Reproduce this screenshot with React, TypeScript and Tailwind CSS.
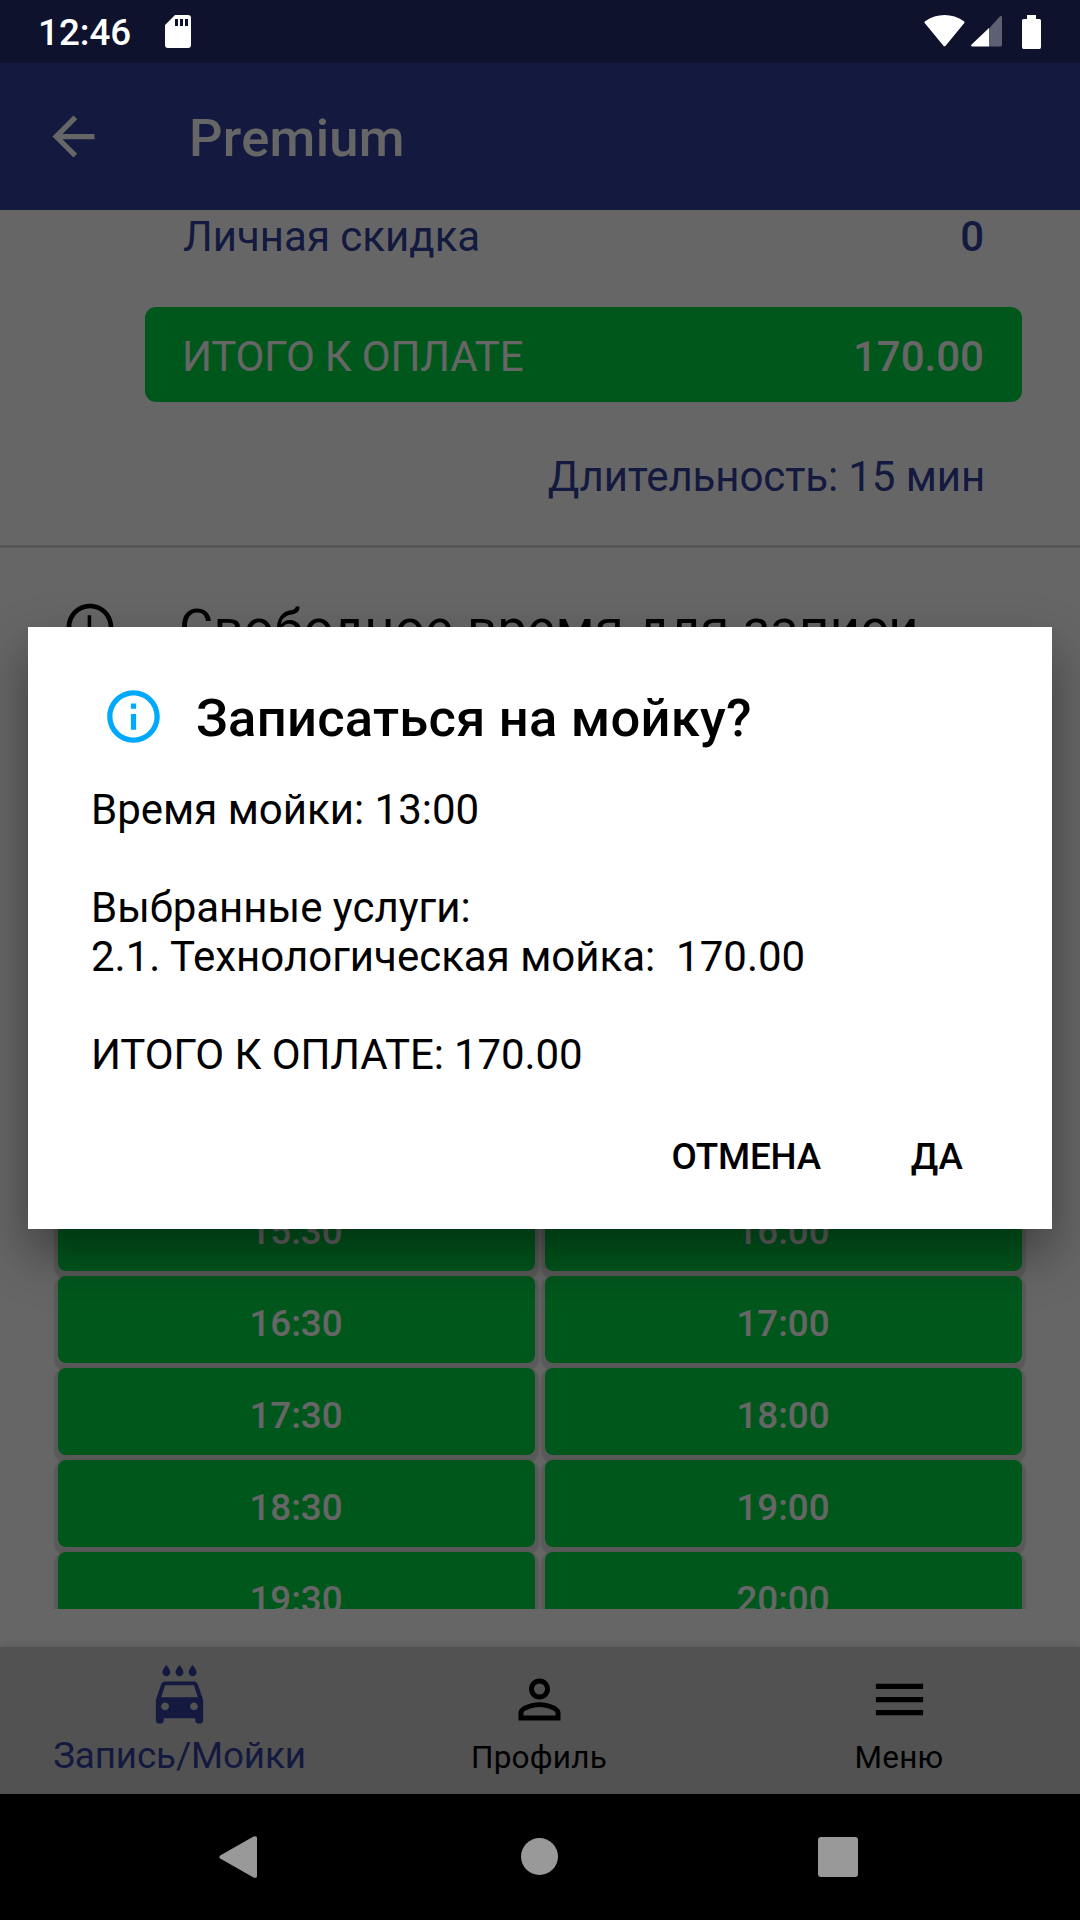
import { useState } from "react";
import {
  MdAccessTime,
  MdArrowBack,
  MdInfoOutline,
  MdLocalCarWash,
  MdMenu,
  MdPersonOutline,
} from "react-icons/md";

interface Slot {
  time: string;
}

const slots: Slot[] = [
  { time: "15:30" },
  { time: "16:00" },
  { time: "16:30" },
  { time: "17:00" },
  { time: "17:30" },
  { time: "18:00" },
  { time: "18:30" },
  { time: "19:00" },
  { time: "19:30" },
  { time: "20:00" },
];

function StatusBar() {
  return (
    <div className="relative z-20 flex h-[63px] items-center justify-between pl-[38px] pr-[39px] text-white">
      <div className="flex items-center">
        <span className="mt-[4px] text-[36.75px] font-medium leading-none">12:46</span>
        <svg className="ml-[34px] h-[33px] w-[26px]" viewBox="0 0 26 33">
          <path
            fill="currentColor"
            fillRule="evenodd"
            d="M10 0H23a3 3 0 0 1 3 3V30a3 3 0 0 1-3 3H3a3 3 0 0 1-3-3V10ZM10 4v7h3V4Zm5 0v7h3V4Zm5 0v7h3V4Z"
          />
        </svg>
      </div>

      <div className="flex items-center">
        <svg className="h-[33px] w-[41px]" viewBox="0 0 41 33">
          <path
            fill="currentColor"
            d="M.9 8.2C.2 7.4.3 6.8 1.1 6.200C12.500-2 28.500-2 39.900 6.200c.8.6.9 1.200.2 2L21.600 30.700c-.7.8-1.500.8-2.200 0Z"
          />
        </svg>
        <svg className="ml-[6px] h-[33px] w-[31px]" viewBox="0 0 31 33">
          <path fill="currentColor" fillOpacity=".33" d="M18 13.500 29 1.300q2-1 2 1V30q0 1.500-1.500 1.500H18Z" />
          <path fill="currentColor" d="M18 13V31.500H1.500Q-.8 31.500 .6 29.500Z" />
        </svg>
        <svg className="ml-[20px] h-[34px] w-[19px]" viewBox="0 0 19 34">
          <path fill="currentColor" d="M5 0h9v4h3.500Q19 4 19 5.500V32q0 2-1.500 2h-16Q0 34 0 32V5.500Q0 4 1.500 4H5Z" />
        </svg>
      </div>
    </div>
  );
}

function TabBar() {
  return (
    <nav className="grid h-[147px] grid-cols-3 bg-[#cdcdcd] shadow-[0_-2px_6px_rgba(0,0,0,0.12)]">
      <div className="flex flex-col items-center pr-[1px] pt-[16px] text-[#303f9f]">
        <MdLocalCarWash className="size-[63px]" />
        <span className="mt-[8px] text-[36.75px] leading-[43px] tracking-[-0.1px]">Запись/Мойки</span>
      </div>
      <div className="flex flex-col items-center pr-[2px] pt-[21px]">
        <MdPersonOutline className="size-[63px]" />
        <span className="mt-[8px] text-[31.5px] leading-[37px] tracking-[0.2px]">Профиль</span>
      </div>
      <div className="flex flex-col items-center pr-[2px] pt-[21px]">
        <MdMenu className="size-[63px]" />
        <span className="mt-[8px] text-[31.5px] leading-[37px] tracking-[0.2px]">Меню</span>
      </div>
    </nav>
  );
}

function SystemNav() {
  return (
    <div className="relative z-20 flex h-[126px] items-center bg-black pb-[1px] text-[#999999]">
      <svg className="ml-[219px] h-[42px] w-[38px]" viewBox="0 0 38 42">
        <path fill="currentColor" d="M1.200 19.500 34.500.6Q38-.8 38 2V40q0 2.800-3.500 1.400L1.200 22.500q-1.600-1.500 0-3Z" />
      </svg>
      <div className="ml-[264px] size-[37px] rounded-full bg-current" />
      <div className="ml-[260px] size-[40px] rounded-[3px] bg-current" />
    </div>
  );
}

interface ConfirmDialogProps {
  onClose: () => void;
}

function ConfirmDialog({ onClose }: ConfirmDialogProps) {
  return (
    <div className="absolute left-[28px] top-[627px] z-10 h-[602px] w-[1024px] bg-white pl-[63px] pr-[89px] shadow-[0_24px_48px_rgba(0,0,0,0.4)]">
      <div className="flex items-center pl-[11px] pt-[56px]">
        <MdInfoOutline className="size-[63px] text-[#00a9fb]" />
        <h2 className="ml-[31px] mt-[4px] text-[52.5px] font-medium leading-[62px] tracking-[0.25px]">
          Записаться на мойку?
        </h2>
      </div>

      <div className="mt-[36px] whitespace-pre text-[42px] leading-[49px]">
        <p>Время мойки: 13:00</p>
        <p className="mt-[49px]">Выбранные услуги:</p>
        <p>{"2.1. Технологическая мойка:  170.00"}</p>
        <p className="mt-[49px] tracking-[-0.1px]">ИТОГО К ОПЛАТЕ: 170.00</p>
      </div>

      <div className="mt-[56px] flex justify-end gap-[90px] text-[36.75px] font-medium leading-[43px]">
        <button className="tracking-[-0.2px]" onClick={onClose}>
          ОТМЕНА
        </button>
        <button onClick={onClose}>ДА</button>
      </div>
    </div>
  );
}

export default function App() {
  const [isOpen, setIsOpen] = useState(true);

  return (
    <div className="relative flex h-[1920px] w-[1080px] flex-col overflow-hidden bg-white font-['Roboto',sans-serif] text-black">
      <div className="bg-[#252d72]">
        <StatusBar />
      </div>

      <header className="flex h-[147px] items-center bg-[#303f9f] pl-[42px] text-white">
        <MdArrowBack className="size-[63px]" />
        <h1 className="ml-[84px] mt-[3px] text-[52.5px] font-medium leading-[62px] tracking-[0.3px]">
          Premium
        </h1>
      </header>

      <main className="flex h-[1399px] flex-col overflow-hidden">
        <div className="ml-[145px] mr-[58px] text-[42px] leading-[49px] text-[#303f9f]">
          <div className="flex justify-between px-[38px] pt-[2px]">
            <span>Личная скидка</span>
            <span className="font-medium">0</span>
          </div>
          <div className="mt-[46px] flex h-[95px] items-center justify-between rounded-[11px] bg-[#00da46] pl-[37px] pr-[38px] pt-[4px] text-white">
            <span className="tracking-[-0.2px]">ИТОГО К ОПЛАТЕ</span>
            <span className="font-medium">170.00</span>
          </div>
          <p className="mt-[50px] pr-[37px] text-right tracking-[-0.1px]">Длительность: 15 мин</p>
        </div>

        <div className="mt-[44px] h-[3px] shrink-0 bg-[#d9d9d9]" />

        <div className="mt-[48px] flex h-[64px] shrink-0 items-center pl-[62px]">
          <MdAccessTime className="mb-[2px] size-[56px]" />
          <h2 className="ml-[61px] text-[52.5px] leading-[62px] tracking-[0.4px]">
            Свободное время для записи
          </h2>
        </div>

        <div className="mx-[58px] mt-[524px] grid shrink-0 grid-cols-2 gap-x-[10px] gap-y-[5px]">
          {slots.map((slot) => (
            <button
              key={slot.time}
              onClick={() => setIsOpen(true)}
              className="h-[87px] rounded-[8px] bg-[#00da46] pr-[1px] pt-[8px] text-[36.75px] font-medium leading-[43px] text-white shadow-[0_4px_2px_4px_rgba(0,0,0,0.13)]"
            >
              {slot.time}
            </button>
          ))}
        </div>
      </main>

      <div className="h-[38px]" />
      <TabBar />
      <SystemNav />

      {isOpen && (
        <>
          <div className="absolute inset-0 bg-black/60" onClick={() => setIsOpen(false)} />
          <ConfirmDialog onClose={() => setIsOpen(false)} />
        </>
      )}
    </div>
  );
}
